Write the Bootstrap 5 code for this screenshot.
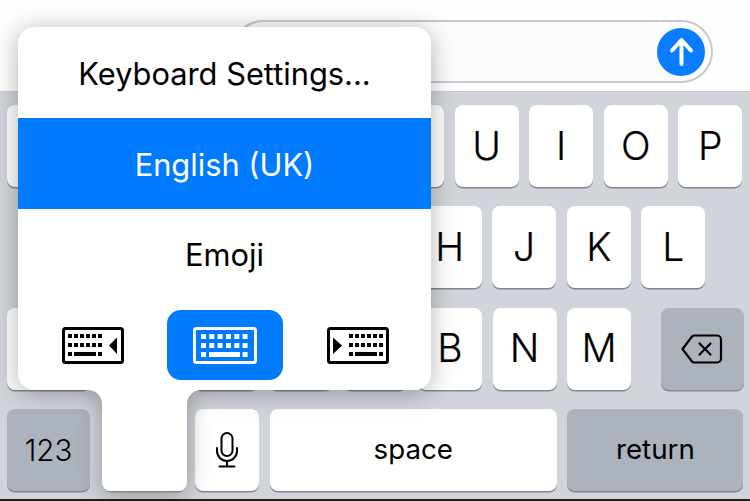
<!DOCTYPE html>
<html lang="en"><head><meta charset="utf-8"><title>Keyboard</title>
<link href="https://cdn.jsdelivr.net/npm/bootstrap@5.3.0/dist/css/bootstrap.min.css" rel="stylesheet">
<style>
html,body{margin:0;height:501px;overflow:hidden;background:#fff}
body{font-family:Inter,"Liberation Sans",sans-serif;color:#000}
.screen{width:750px;height:501px;overflow:hidden}
.topbar{height:91px;padding:20px 37px 0 232px;background:#fefefe}
.field{height:63px;border:2px solid #c8c8cd;border-radius:32px;background:#fcfcfc;padding-right:6px}
.board{height:408px;background:#d1d5db;padding:13px 7px 0;border-top:1px solid #c9cbd0;row-gap:19.3px}
.endline{height:2px;background:#222}
.keyrow{height:82px;gap:10.6px}
.keyrow.inset{padding-left:37.6px}
.kk{width:64px;height:82px;background:#fff;border-radius:8px;box-shadow:0 1.5px 0 #85878c;font-size:39px;font-weight:300;-webkit-text-stroke:.2px #000;flex:none}
.kk.dark{background:#adb3bd}
.kk.w83{width:83px}
.kk.sm{font-size:27.7px;font-weight:400;-webkit-text-stroke:0}
.kk.digits{font-size:29.5px;font-weight:300}
.spacer{margin-right:19px}
.stemgap{width:84px;height:82px;flex:none}
.kk.spc{width:287px}
.kk.ret{width:176px}
.pop{position:absolute;left:18px;top:27px;width:413px;height:465px}
.popbg{position:absolute;left:0;top:0;filter:drop-shadow(0 3px 12px rgba(0,0,0,.3))}
.popbody{position:relative;width:413px;height:363px}
.popitem{height:90.5px;font-size:30.8px;line-height:1;padding-top:4px}
.popfirst{height:91px}
.popsel{background:#007aff;color:#fff}
.kbicons{height:70px;margin-top:11px;padding:0 42px 0 44px}
.kbtile{width:116px;height:70px;border-radius:14px;flex:none;margin-left:43px}
.kbtile.on{background:#007aff}
</style></head>
<body>
<div class="screen position-relative">
  <div class="topbar">
    <div class="field d-flex align-items-center justify-content-end">
      <svg width="48" height="48" viewBox="0 0 48 48"><circle cx="24" cy="24" r="24" fill="#0a7cff"/><path d="M24.5 36V12M15 22.5 24.5 12 34 22.5" fill="none" stroke="#fff" stroke-width="4" stroke-linecap="round" stroke-linejoin="round"/></svg>
    </div>
  </div>
  <div class="board d-flex flex-column">
    <div class="keyrow d-flex">
      <div class="kk"></div><div class="kk"></div><div class="kk"></div><div class="kk"></div><div class="kk"></div><div class="kk"></div>
      <div class="kk d-flex align-items-center justify-content-center">U</div>
      <div class="kk d-flex align-items-center justify-content-center">I</div>
      <div class="kk d-flex align-items-center justify-content-center">O</div>
      <div class="kk d-flex align-items-center justify-content-center">P</div>
    </div>
    <div class="keyrow inset d-flex">
      <div class="kk"></div><div class="kk"></div><div class="kk"></div><div class="kk"></div><div class="kk"></div>
      <div class="kk d-flex align-items-center justify-content-center">H</div>
      <div class="kk d-flex align-items-center justify-content-center">J</div>
      <div class="kk d-flex align-items-center justify-content-center">K</div>
      <div class="kk d-flex align-items-center justify-content-center">L</div>
    </div>
    <div class="keyrow d-flex">
      <div class="kk w83 spacer"></div><div class="kk"></div><div class="kk"></div><div class="kk"></div><div class="kk"></div>
      <div class="kk d-flex align-items-center justify-content-center">B</div>
      <div class="kk d-flex align-items-center justify-content-center">N</div>
      <div class="kk spacer d-flex align-items-center justify-content-center">M</div>
      <div class="kk w83 dark d-flex align-items-center justify-content-center">
        <svg width="44" height="32" viewBox="0 0 44 32"><path d="M14 2.500H37a4 4 0 0 1 4 4v19a4 4 0 0 1-4 4H14a3 3 0 0 1-2-1L2.500 16 12 3.500a3 3 0 0 1 2-1Z" fill="none" stroke="#000" stroke-width="2.200" stroke-linejoin="round"/><path d="M19.500 10.500 30.500 21.500M30.500 10.500 19.500 21.500" stroke="#000" stroke-width="2.200" stroke-linecap="round"/></svg>
      </div>
    </div>
    <div class="keyrow d-flex">
      <div class="kk w83 dark sm digits d-flex align-items-center justify-content-center">123</div>
      <div class="stemgap"></div>
      <div class="kk d-flex align-items-center justify-content-center">
        <svg width="24" height="36" viewBox="0 0 24 36"><rect x="6.500" y="1" width="11" height="23" rx="5.500" fill="none" stroke="#000" stroke-width="2"/><path d="M2 16v3a10 10 0 0 0 20 0v-3M12 29v5.500M4.500 34.500h15" fill="none" stroke="#000" stroke-width="2" stroke-linecap="round"/></svg>
      </div>
      <div class="kk spc sm d-flex align-items-center justify-content-center">space</div>
      <div class="kk ret dark sm d-flex align-items-center justify-content-center">return</div>
    </div>
  </div>
  <div class="endline"></div>

  <div class="pop">
    <svg class="popbg" width="413" height="467" viewBox="0 0 413 467"><path d="M85 456a8 8 0 0 0 8 8.700H160a8 8 0 0 0 8-8.700" fill="none" stroke="#85878c" stroke-width="1.500"/><path d="M16 0H397a16 16 0 0 1 16 16V347a16 16 0 0 1-16 16H183A14 14 0 0 0 169 377V456a8 8 0 0 1-8 8H92a8 8 0 0 1-8-8V377A14 14 0 0 0 70 363H16a16 16 0 0 1-16-16V16A16 16 0 0 1 16 0Z" fill="#fff"/></svg>
    <div class="popbody d-flex flex-column">
      <div class="popitem popfirst d-flex align-items-center justify-content-center">Keyboard Settings...</div>
      <div class="popitem popsel d-flex align-items-center justify-content-center">English (UK)</div>
      <div class="popitem d-flex align-items-center justify-content-center">Emoji</div>
      <div class="kbicons d-flex align-items-center">
        <svg width="62" height="37" viewBox="0 0 62 37"><rect x="1.500" y="1.500" width="59" height="34" rx="2" fill="none" stroke="#000" stroke-width="3"/><g fill="#000"><path d="M6 7h4v4H6zM12 7h4v4h-4zM18 7h4v4h-4zM24 7h4v4h-4zM30 7h4v4h-4zM36 7h4v4h-4zM6 16h4v4H6zM12 16h4v4h-4zM18 16h4v4h-4zM24 16h4v4h-4zM30 16h4v4h-4zM36 16h4v4h-4zM6 25h4v4H6zM12 25h22v4H12zM36 25h4v4h-4z"/><path d="M47 18.500 55 10.500V27Z"/></g></svg>
        <div class="kbtile on d-flex align-items-center justify-content-center">
          <svg width="64" height="37" viewBox="0 0 64 37"><rect x="1.500" y="1.500" width="61" height="34" rx="2" fill="none" stroke="#fff" stroke-width="3"/><g fill="#fff"><path d="M8 7h5v5H8zM16.300 7h5v5h-5zM24.600 7h5v5h-5zM33 7h5v5h-5zM41.300 7h5v5h-5zM49.600 7h5v5h-5zM8 16h5v5H8zM16.300 16h5v5h-5zM24.600 16h5v5h-5zM33 16h5v5h-5zM41.300 16h5v5h-5zM49.600 16h5v5h-5zM8 25h5v5H8zM16 25h31v5H16zM49.600 25h5v5h-5z"/></g></svg>
        </div>
        <svg width="62" height="37" viewBox="0 0 62 37" class="ms-auto"><rect x="1.500" y="1.500" width="59" height="34" rx="2" fill="none" stroke="#000" stroke-width="3"/><g fill="#000"><path d="M6 10.500 15 18.500 6 27Z"/><path d="M22 7h4v4h-4zM28 7h4v4h-4zM34 7h4v4h-4zM40 7h4v4h-4zM46 7h4v4h-4zM52 7h4v4h-4zM22 16h4v4h-4zM28 16h4v4h-4zM34 16h4v4h-4zM40 16h4v4h-4zM46 16h4v4h-4zM52 16h4v4h-4zM22 25h4v4h-4zM28 25h22v4H28zM52 25h4v4h-4z"/></g></svg>
      </div>
    </div>
  </div>
</div>
<script src="https://cdn.jsdelivr.net/npm/bootstrap@5.3.0/dist/js/bootstrap.bundle.min.js"></script>
</body></html>
